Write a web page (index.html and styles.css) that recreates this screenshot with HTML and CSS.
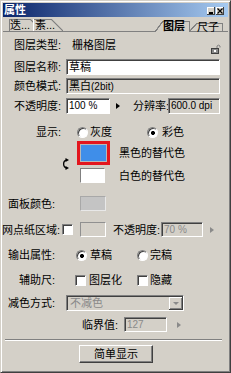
FILE: index.html
```html
<!DOCTYPE html>
<html>
<head>
<meta charset="utf-8">
<link rel="stylesheet" href="styles.css">
</head>
<body>
<div class="win">
  <div class="titlebar">
    <span class="title">属性</span>
    <span class="tbtns">
      <span class="tbtn"><svg width="6" height="6" viewBox="0 0 6 6"><rect x="1" y="4" width="4" height="2" fill="#000"/></svg></span>
      <span class="tbtn"><svg width="6" height="6" viewBox="0 0 6 6"><path d="M0.5 0.5 L5.5 5.5 M5.5 0.5 L0.5 5.5" stroke="#000" stroke-width="1.2"/></svg></span>
    </span>
  </div>
  <div class="tabs">
    <div class="tab-l t1">迭...</div>
    <div class="tab-l t2">素...</div>
    <div class="tabfill"></div>
    <div class="tab-r sel">图层</div>
    <div class="tab-r t4">尺子</div>
  </div>
  <div class="page">
    <div class="row r-type">
      <span class="lbl">图层类型:</span>
      <span>栅格图层</span>
      <svg class="lock" width="11" height="11" viewBox="0 0 11 11">
        <path d="M7 5 V3 A2 2 0 0 1 10 3 V4.5" fill="none" stroke="#808080" stroke-width="1"/>
        <rect x="1.5" y="5.5" width="7" height="5" fill="#8a8a8a" stroke="#404040" stroke-width="1"/>
        <rect x="4" y="7" width="2" height="2" fill="#fff"/>
      </svg>
    </div>
    <div class="row r-name">
      <span class="lbl">图层名称:</span>
      <div class="field wide">草稿</div>
    </div>
    <div class="row r-mode">
      <span class="lbl">颜色模式:</span>
      <div class="field ro wide">黑白<span class="small">(2bit)</span></div>
    </div>
    <div class="row r-opac">
      <span class="lbl">不透明度:</span>
      <div class="field num opac">100 %</div>
      <span class="arrow"></span>
      <span class="lbl res">分辨率:</span>
      <div class="field num ro dpi">600.0 dpi</div>
    </div>
    <div class="row r-show">
      <span class="lbl">显示:</span>
      <span class="radio r1"></span><span class="rtxt t1">灰度</span>
      <span class="radio on r2"></span><span class="rtxt t2">彩色</span>
    </div>
    <div class="swatches">
      <svg class="swap" width="7" height="12" viewBox="0 0 7 12">
        <path d="M5 2 C0.5 2.5 0.5 9.5 5 10" fill="none" stroke="#000" stroke-width="1.3"/>
        <polygon points="3.5,0 7,2 3.5,4" fill="#000"/>
        <polygon points="3.5,8 7,10 3.5,12" fill="#000"/>
      </svg>
      <div class="sw-black"></div>
      <span class="sw-txt1">黑色的替代色</span>
      <div class="sw-white"></div>
      <span class="sw-txt2">白色的替代色</span>
    </div>
    <div class="row r-panel">
      <span class="lbl">面板颜色:</span>
      <div class="sw-panel"></div>
    </div>
    <div class="row r-dot">
      <span class="lbl">网点纸区域:</span>
      <span class="check c1"></span>
      <div class="sw-empty"></div>
      <span class="lbl op2">不透明度:</span>
      <div class="field num dis op2f">70 %</div>
      <span class="arrow gray"></span>
    </div>
    <div class="row r-out">
      <span class="lbl">输出属性:</span>
      <span class="radio on r1"></span><span class="rtxt t1">草稿</span>
      <span class="radio r2"></span><span class="rtxt t2">完稿</span>
    </div>
    <div class="row r-aux">
      <span class="lbl">辅助尺:</span>
      <span class="check c1"></span><span class="rtxt t1">图层化</span>
      <span class="check c2"></span><span class="rtxt t2">隐藏</span>
    </div>
    <div class="row r-reduce">
      <span class="lbl">减色方式:</span>
      <div class="select"><span class="seltxt">不减色</span><span class="dd"></span></div>
    </div>
    <div class="row r-thr">
      <span class="lbl">临界值:</span>
      <div class="field num dis thr">127</div>
      <span class="arrow gray"></span>
    </div>
    <div class="sep"></div>
    <div class="btn">简单显示</div>
  </div>
</div>
</body>
</html>
```
FILE: styles.css
```css
html, body {
  margin: 0;
  padding: 0;
  background: #d4d0c8;
}
body {
  font-family: "Liberation Sans", "Noto Sans CJK SC", sans-serif;
  font-size: 11px;
  line-height: 14px;
  color: #000;
}
.win {
  width: 231px;
  height: 373px;
  box-sizing: border-box;
  border: 1px solid;
  border-color: #d4d0c8 #404040 #404040 #d4d0c8;
  box-shadow: inset 1px 1px #fff, inset -1px -1px #808080;
  padding: 2px;
  display: flex;
  flex-direction: column;
  background: #d4d0c8;
}
.titlebar {
  flex: none;
  height: 14px;
  background: linear-gradient(to right, #0a246a, #a6caf0);
  display: flex;
  align-items: center;
  padding: 0 4px 0 1px;
}
.title {
  color: #fff;
  font-weight: bold;
  line-height: 14px;
}
.tbtns {
  margin-left: auto;
  display: flex;
  gap: 1px;
  align-self: flex-end;
  margin-bottom: 2px;
}
.tbtn {
  width: 8px;
  height: 8px;
  box-sizing: border-box;
  background: #d4d0c8;
  box-shadow: inset -1px -1px #404040, inset 1px 1px #fff;
  display: flex;
  align-items: center;
  justify-content: center;
}
.tbtn svg { display: block; }

/* tabs */
.tabs {
  flex: none;
  height: 15px;
  display: flex;
  align-items: flex-end;
  background: linear-gradient(#808080, #808080) left bottom / 100% 1px no-repeat;
}
.tab-l {
  flex: none;
  height: 12px;
  box-sizing: border-box;
  margin-bottom: 1px;
  line-height: 12px;
  white-space: nowrap;
  border-left: 1px solid #808080;
  background:
    linear-gradient(#808080, #808080) left top / calc(100% - 12px) 1px no-repeat,
    linear-gradient(to top right, #d4d0c8 calc(50% - 0.8px), #808080 calc(50% - 0.5px), #808080 calc(50% + 0.5px), transparent calc(50% + 0.8px)) right top / 12px 100% no-repeat,
    linear-gradient(#d4d0c8, #d4d0c8) left top / calc(100% - 12px) 100% no-repeat;
}
.tab-l.t1 {
  margin-left: 6px;
  width: 33px;
}
.tab-l.t2 {
  margin-left: -9px;
  width: 30px;
  border-left-color: #fff;
  padding-left: 1px;
}
.tabfill { flex: 1; }
.tab-r {
  flex: none;
  box-sizing: border-box;
  white-space: nowrap;
  border-right: 1px solid #808080;
}
.tab-r.sel {
  width: 35px;
  height: 11px;
  line-height: 11px;
  padding-left: 8px;
  font-weight: bold;
  background:
    linear-gradient(#808080, #808080) right top / calc(100% - 8px) 1px no-repeat,
    linear-gradient(to bottom right, transparent calc(50% - 0.8px), #808080 calc(50% - 0.5px), #808080 calc(50% + 0.5px), #d4d0c8 calc(50% + 0.8px)) left top / 8px 100% no-repeat,
    linear-gradient(#d4d0c8, #d4d0c8) right top / calc(100% - 8px) 100% no-repeat;
}
.tab-r.t4 {
  width: 33px;
  height: 8px;
  line-height: 9px;
  margin-bottom: 1px;
  margin-right: 5px;
  padding-left: 7px;
  background:
    linear-gradient(#808080, #808080) right top / calc(100% - 7px) 1px no-repeat,
    linear-gradient(to bottom right, transparent calc(50% - 0.8px), #808080 calc(50% - 0.5px), #808080 calc(50% + 0.5px), #d4d0c8 calc(50% + 0.8px)) left top / 7px 100% no-repeat,
    linear-gradient(#d4d0c8, #d4d0c8) right top / calc(100% - 7px) 100% no-repeat;
}

/* page */
.page {
  flex: 1;
  display: flex;
  flex-direction: column;
}
.row {
  flex: none;
  display: flex;
  align-items: center;
}
.lbl {
  flex: none;
  white-space: nowrap;
}
.field {
  flex: none;
  box-sizing: border-box;
  height: 16px;
  border: 1px solid;
  border-color: #808080 #fff #fff #808080;
  box-shadow: inset 1px 1px #404040;
  background: #fff;
  padding: 0 0 0 2px;
  line-height: 14px;
  white-space: nowrap;
  overflow: hidden;
}
.field.num { font-size: 10px; }
.field.ro { background: #d4d0c8; }
.field.dis {
  background: #d4d0c8;
  color: #8a8a8a;
  height: 15px;
  line-height: 13px;
}
.small { font-size: 10px; }
.arrow {
  flex: none;
  width: 0;
  height: 0;
  border-left: 4px solid #000;
  border-top: 3px solid transparent;
  border-bottom: 3px solid transparent;
}
.arrow.gray { border-left-color: #8a8a8a; }

.r-type { height: 14px; margin-top: 6px; }
.r-type .lbl { margin-left: 11px; width: 58px; }
.lock {
  margin-left: auto;
  margin-right: 7px;
  align-self: flex-end;
  margin-bottom: -2px;
  flex: none;
}
.r-name { height: 16px; margin-top: 7px; }
.r-mode { height: 16px; margin-top: 3px; }
.r-opac { height: 16px; margin-top: 4px; }
.r-name .lbl, .r-mode .lbl, .r-opac .lbl { margin-left: 11px; width: 52px; }
.field.wide { width: 154px; }
.field.opac { width: 44px; }
.r-opac .arrow { margin-left: 6px; }
.r-opac .lbl.res { margin-left: 13px; width: 35px; }
.field.dpi { width: 52px; }

.radio {
  flex: none;
  width: 11px;
  height: 11px;
  box-sizing: border-box;
  border-radius: 50%;
  border: 1px solid;
  border-color: #808080 #fff #fff #808080;
  box-shadow: inset 1px 1px #404040;
  background: #fff;
}
.radio.on {
  background: radial-gradient(circle at 55% 55%, #000 0 1.7px, #fff 2.3px);
}
.check {
  flex: none;
  width: 11px;
  height: 11px;
  box-sizing: border-box;
  border: 1px solid;
  border-color: #808080 #fff #fff #808080;
  box-shadow: inset 1px 1px #404040;
  background: #fff;
}
.rtxt { flex: none; white-space: nowrap; }

.r-show { height: 14px; margin-top: 11px; }
.r-show .lbl { width: 58px; text-align: right; }
.r-show .radio.r1 { margin-left: 16px; }
.r-show .rtxt.t1 { margin-left: 2px; width: 22px; }
.r-show .radio.r2 { margin-left: 35px; }
.r-show .rtxt.t2 { margin-left: 4px; }

.swatches {
  flex: none;
  display: grid;
  grid-template-columns: 74px 42px auto;
  grid-template-rows: 24px 15px;
  row-gap: 3px;
  margin-top: 2px;
}
.swap {
  grid-column: 1;
  grid-row: 1 / 3;
  justify-self: end;
  align-self: end;
  margin: 0 8px 13px 0;
}
.sw-black {
  grid-column: 2;
  grid-row: 1;
  width: 33px;
  height: 24px;
  box-sizing: border-box;
  border: 3px solid #e3161e;
  background: #3f8ee9;
  box-shadow: inset 0 0 0 1px #b8b8b8;
}
.sw-txt1 {
  grid-column: 3;
  grid-row: 1;
  align-self: center;
  white-space: nowrap;
}
.sw-white {
  grid-column: 2;
  grid-row: 2;
  margin-left: 3px;
  width: 25px;
  height: 15px;
  box-sizing: border-box;
  border: 1px solid;
  border-color: #808080 #fff #fff #808080;
  background: #fff;
}
.sw-txt2 {
  grid-column: 3;
  grid-row: 2;
  align-self: center;
  white-space: nowrap;
}

.r-panel { height: 15px; margin-top: 13px; }
.r-panel .lbl { width: 52px; text-align: right; }
.sw-panel {
  flex: none;
  margin-left: 25px;
  width: 26px;
  height: 15px;
  box-sizing: border-box;
  border: 1px solid;
  border-color: #a8a8a8 #e8e8e8 #e8e8e8 #a8a8a8;
  background: #c4c4c4;
}

.r-dot { height: 15px; margin-top: 11px; }
.r-dot .lbl { margin-left: -1px; width: 58px; }
.r-dot .check { margin-left: 2px; }
.sw-empty {
  flex: none;
  margin-left: 7px;
  width: 26px;
  height: 15px;
  box-sizing: border-box;
  border: 1px solid;
  border-color: #909090 #fff #fff #909090;
}
.r-dot .lbl.op2 { margin-left: 7px; width: 47px; }
.field.op2f { margin-left: 1px; width: 42px; }
.r-dot .arrow { margin-left: 7px; }

.r-out { height: 14px; margin-top: 11px; }
.r-out .lbl { width: 52px; text-align: right; }
.r-out .radio.r1 { margin-left: 21px; }
.r-out .rtxt.t1 { margin-left: 3px; width: 22px; }
.r-out .radio.r2 { margin-left: 25px; }
.r-out .rtxt.t2 { margin-left: 2px; }

.r-aux { height: 14px; margin-top: 11px; }
.r-aux .lbl { width: 52px; text-align: right; }
.r-aux .check.c1 { margin-left: 20px; }
.r-aux .rtxt.t1 { margin-left: 3px; width: 34px; }
.r-aux .check.c2 { margin-left: 14px; }
.r-aux .rtxt.t2 { margin-left: 2px; }

.r-reduce { height: 16px; margin-top: 8px; }
.r-reduce .lbl { width: 52px; text-align: right; }
.select {
  flex: none;
  margin-left: 11px;
  width: 118px;
  height: 16px;
  box-sizing: border-box;
  border: 1px solid;
  border-color: #808080 #fff #fff #808080;
  box-shadow: inset 1px 1px #404040;
  background: #d4d0c8;
  display: flex;
  align-items: center;
  padding: 1px 0 0 1px;
}
.seltxt {
  flex: 1;
  color: #8a8a8a;
  padding-left: 2px;
  line-height: 13px;
}
.dd {
  flex: none;
  width: 14px;
  height: 13px;
  box-sizing: border-box;
  background: #d4d0c8;
  box-shadow: inset -1px -1px #404040, inset 1px 1px #fff, inset -2px -2px #808080;
  display: flex;
  align-items: center;
  justify-content: center;
}
.dd::after {
  content: "";
  width: 0;
  height: 0;
  border-top: 3px solid #8a8a8a;
  border-left: 3px solid transparent;
  border-right: 3px solid transparent;
}

.r-thr { height: 15px; margin-top: 6px; }
.r-thr .lbl { margin-left: 79px; width: 42px; }
.field.thr { width: 43px; }
.r-thr .arrow { margin-left: 10px; }

.sep {
  flex: none;
  margin: 7px 0 0 2px;
  width: 217px;
  height: 0;
  border-top: 1px solid #808080;
  border-bottom: 1px solid #fff;
}
.btn {
  flex: none;
  margin: 4px 0 0 76px;
  width: 74px;
  height: 18px;
  box-sizing: border-box;
  border: 1px solid;
  border-color: #fff #404040 #404040 #fff;
  box-shadow: inset -1px -1px #808080;
  text-align: center;
  line-height: 16px;
}
```
